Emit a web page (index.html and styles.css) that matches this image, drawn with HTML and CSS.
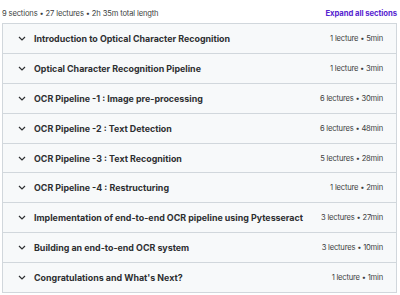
FILE: index.html
```html
<!DOCTYPE html>
<html>
<head>
<meta charset="utf-8">
<link rel="stylesheet" href="styles.css">
</head>
<body>
<div class="page">
  <div class="top">
    <span class="meta">9 sections • 27 lectures • 2h 35m total length</span>
    <span class="expand">Expand all sections</span>
  </div>
  <div class="list">
    <div class="row"><span class="chev"><svg width="8" height="5" viewBox="0 0 8 5"><path d="M1 1 L4 4 L7 1" fill="none" stroke="#2d2f31" stroke-width="1.2"/></svg></span><span class="title">Introduction to Optical Character Recognition</span><span class="info">1 lecture • 5min</span></div>
    <div class="row"><span class="chev"><svg width="8" height="5" viewBox="0 0 8 5"><path d="M1 1 L4 4 L7 1" fill="none" stroke="#2d2f31" stroke-width="1.2"/></svg></span><span class="title">Optical Character Recognition Pipeline</span><span class="info">1 lecture • 3min</span></div>
    <div class="row"><span class="chev"><svg width="8" height="5" viewBox="0 0 8 5"><path d="M1 1 L4 4 L7 1" fill="none" stroke="#2d2f31" stroke-width="1.2"/></svg></span><span class="title">OCR Pipeline -1 : Image pre-processing</span><span class="info">6 lectures • 30min</span></div>
    <div class="row"><span class="chev"><svg width="8" height="5" viewBox="0 0 8 5"><path d="M1 1 L4 4 L7 1" fill="none" stroke="#2d2f31" stroke-width="1.2"/></svg></span><span class="title">OCR Pipeline -2 : Text Detection</span><span class="info">6 lectures • 48min</span></div>
    <div class="row"><span class="chev"><svg width="8" height="5" viewBox="0 0 8 5"><path d="M1 1 L4 4 L7 1" fill="none" stroke="#2d2f31" stroke-width="1.2"/></svg></span><span class="title">OCR Pipeline -3 : Text Recognition</span><span class="info">5 lectures • 28min</span></div>
    <div class="row"><span class="chev"><svg width="8" height="5" viewBox="0 0 8 5"><path d="M1 1 L4 4 L7 1" fill="none" stroke="#2d2f31" stroke-width="1.2"/></svg></span><span class="title">OCR Pipeline -4 : Restructuring</span><span class="info">1 lecture • 2min</span></div>
    <div class="row"><span class="chev"><svg width="8" height="5" viewBox="0 0 8 5"><path d="M1 1 L4 4 L7 1" fill="none" stroke="#2d2f31" stroke-width="1.2"/></svg></span><span class="title">Implementation of end-to-end OCR pipeline using Pytesseract</span><span class="info">3 lectures • 27min</span></div>
    <div class="row"><span class="chev"><svg width="8" height="5" viewBox="0 0 8 5"><path d="M1 1 L4 4 L7 1" fill="none" stroke="#2d2f31" stroke-width="1.2"/></svg></span><span class="title">Building an end-to-end OCR system</span><span class="info">3 lectures • 10min</span></div>
    <div class="row"><span class="chev"><svg width="8" height="5" viewBox="0 0 8 5"><path d="M1 1 L4 4 L7 1" fill="none" stroke="#2d2f31" stroke-width="1.2"/></svg></span><span class="title">Congratulations and What's Next?</span><span class="info">1 lecture • 1min</span></div>
  </div>
</div>
</body>
</html>
```
FILE: styles.css
```css
* { box-sizing: border-box; }
html, body { margin: 0; padding: 0; background: #fff; }
body { font-family: "Inter", "Liberation Sans", sans-serif; color: #2d2f31; }
.page { padding: 5px 3px 0 2px; }
.top { display: flex; justify-content: space-between; align-items: center; height: 16px; margin-bottom: 2px; }
.meta { font-size: 7.6px; letter-spacing: -0.15px; color: #3d3f41; }
.expand { font-size: 7.7px; font-weight: 700; color: #5624d0; letter-spacing: -0.05px; }
.list { border: 1px solid #d1d7dc; border-bottom: 0; }
.row { display: flex; align-items: center; height: 29.9px; background: #f7f9fa; border-bottom: 1px solid #d1d7dc; padding: 0 13px 0 15px; }
.chev { width: 8px; display: flex; align-items: center; margin-right: 8px; }
.title { flex: 1; font-size: 8.9px; font-weight: 700; color: #2d2f31; }
.info { font-size: 7.6px; letter-spacing: -0.2px; color: #3d3f41; }
```
